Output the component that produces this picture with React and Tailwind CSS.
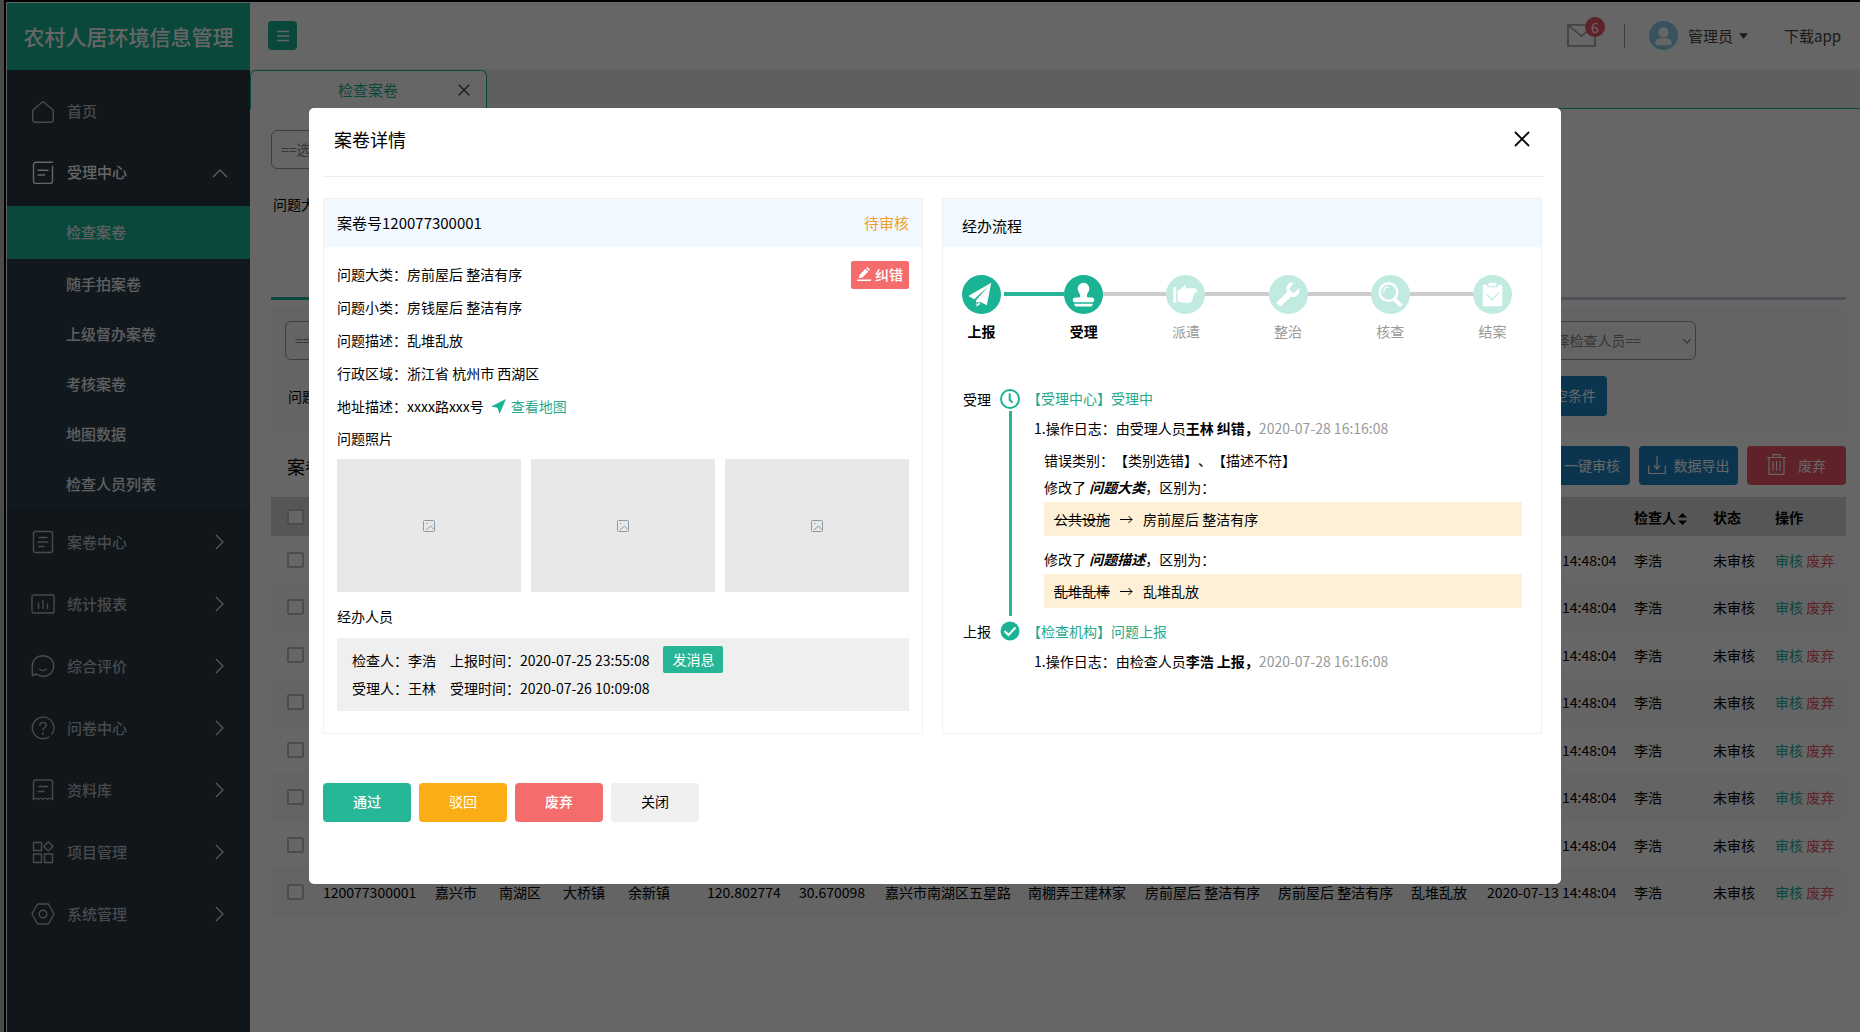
/* eslint-disable react/prop-types */
const subMenu = ['检查案卷', '随手拍案卷', '上级督办案卷', '考核案卷', '地图数据', '检查人员列表']

const menu = [
    { label: '案卷中心', icon: 'doc' },
    { label: '统计报表', icon: 'chart' },
    { label: '综合评价', icon: 'smile' },
    { label: '问卷中心', icon: 'question' },
    { label: '资料库', icon: 'receipt' },
    { label: '项目管理', icon: 'grid' },
    { label: '系统管理', icon: 'hexagon' },
]

const columns = [
    { label: '', width: 52 },
    { label: '案卷号', width: 112 },
    { label: '市', width: 64 },
    { label: '区', width: 64 },
    { label: '镇', width: 65 },
    { label: '村', width: 79 },
    { label: '经度', width: 92 },
    { label: '纬度', width: 86 },
    { label: '地址', width: 143 },
    { label: '描述', width: 117 },
    { label: '大类', width: 133 },
    { label: '小类', width: 133 },
    { label: '问题', width: 76 },
    { label: '时间', width: 147 },
    { label: '检查人', width: 79, sort: true },
    { label: '状态', width: 62 },
    { label: '操作', width: 71 },
]

const record = [
    '120077300001', '嘉兴市', '南湖区', '大桥镇', '余新镇', '120.802774', '30.670098',
    '嘉兴市南湖区五星路', '南棚弄王建林家', '房前屋后 整洁有序', '房前屋后 整洁有序',
    '乱堆乱放', '2020-07-13 14:48:04', '李浩', '未审核',
]

const details = [
    ['问题大类', '房前屋后 整洁有序'],
    ['问题小类', '房钱屋后 整洁有序'],
    ['问题描述', '乱堆乱放'],
    ['行政区域', '浙江省 杭州市 西湖区'],
]

const steps = [
    { label: '上报', icon: 'plane', done: true },
    { label: '受理', icon: 'stamp', done: true },
    { label: '派遣', icon: 'hand' },
    { label: '整治', icon: 'wrench' },
    { label: '核查', icon: 'search' },
    { label: '结案', icon: 'clipboard' },
]

const MenuIcon = ({ name }) => (
    <svg viewBox="0 0 24 24" className="size-6 shrink-0" fill="none" stroke="currentColor" strokeWidth="1.4" strokeLinecap="round" strokeLinejoin="round">
        {name === 'home' && <path d="M1.7 10.2 12 1.5l10.3 8.7v9.6a2.4 2.4 0 0 1-2.4 2.4H4.100a2.4 2.4 0 0 1-2.400-2.400z" />}
        {name === 'open' && <path d="M21.500 1.300H5a2.500 2.500 0 0 0-2.500 2.500v16.400a2.200 2.200 0 0 0 2.200 2.200h14.600a2.200 2.200 0 0 0 2.200-2.200V5.500M7 9.300h10M7 14h6.500" />}
        {name === 'doc' && (
            <>
                <rect x="2.500" y="1.500" width="19" height="21" rx="2" />
                <path d="M8 7.500h8M7 12h10M8 16.500h5" />
            </>
        )}
        {name === 'chart' && (
            <>
                <rect x="1" y="3" width="22" height="18" rx="2" />
                <path d="M7.500 11v5.500M12 8.500v8M16.500 12v4.500" />
            </>
        )}
        {name === 'smile' && <path d="M1.300 21.500V12C1.300 6 6 1.700 12 1.700S22.700 6 22.700 12 18 22.300 12 22.300c-3 0-5-1-6.500-2.300zM8.500 15.300c2 1.500 5 1.500 7 0" />}
        {name === 'question' && (
            <>
                <path d="M18 21a10.800 10.800 0 1 1 3-2.900M9 9.300c0-4 6.200-3.800 6.200-.3 0 2.500-3.200 2.500-3.200 5" />
                <path d="M12 17.500v.2" strokeWidth="2" />
            </>
        )}
        {name === 'receipt' && <path d="M2.500 21.500v-17a2.500 2.500 0 0 1 2.500-2.500h14.500a2 2 0 0 1 2 2v17.500c-1.600-1.800-3.200-1.800-4.700 0-1.600-1.800-3.200-1.800-4.800 0-1.600-1.800-3.200-1.800-4.800 0-1.500-1.800-3.100-1.800-4.700 0zM8 8.500h9M7 13.500h6" />}
        {name === 'grid' && <path d="M2.500 2.500h8v8h-8zM2.500 14h8v8.500h-8zM13.500 14h8v8.500h-8zM17.300 1.700l4.700 4.700-4.700 4.700-4.700-4.700z" />}
        {name === 'hexagon' && (
            <>
                <path d="M6.500 2h11L23 12l-5.500 10h-11L1 12z" />
                <circle cx="12" cy="12" r="3.800" />
            </>
        )}
    </svg>
)

const StepIcon = ({ name }) => (
    <svg viewBox="0 0 40 40" className="size-full" fill="#fff">
        {name === 'plane' && <path d="M30 8 6.500 21.500l6 3.300L26.500 12 14.500 26v5.500l3.700-4 7.300 3.500zM15 27.500l4 2-4 3z" />}
        {name === 'stamp' && (
            <>
                <path d="M20 8a6 6 0 0 1 6 6c0 2.800-2.500 4.500-2.500 7.500 0 1.200.8 1.500 2 1.500h3c1.500 0 2.500 1 2.500 2.500s-.5 2.500-2 2.500H11c-1.500 0-2-1-2-2.500S10 23 11.500 23h3c1.200 0 2-.3 2-1.500 0-3-2.500-4.700-2.500-7.500a6 6 0 0 1 6-6z" />
                <path d="M10.500 29.500h19v1.500h-1v1.200h-17V31h-1z" />
            </>
        )}
        {name === 'hand' && <path d="M7.500 12.500h3v16h-3zM12 15.500l2.500-.5 4-4c1.500-.5 2.500.5 2 2.500h9.500c2.200 0 2.200 5 0 5h-1.500c1 1.500.5 3-1 3.500.8 1.500.3 2.800-1 3.200.3 1.800-.7 3.300-2.500 3.300h-6.500L12 27z" />}
        {name === 'wrench' && <path d="M23.500 7.500c-5 .5-6.500 5.500-5 10L8.500 27.500c-.8.800-.8 1.600 0 2.300l1.800 1.800c.8.800 1.600.8 2.400 0l9.800-9.300c4.500 1.200 9-1.300 9-8.300l-.5-.5-5.300 4.700-3.200-1-1.200-3.500 3.700-5.200z" />}
        {name === 'search' && (
            <>
                <circle cx="18" cy="17.500" r="9" fill="none" stroke="#fff" strokeWidth="2.500" />
                <path d="M13 17.500c0-3 2-5 4.500-5" fill="none" stroke="#fff" strokeWidth="1.300" strokeLinecap="round" />
                <path d="m24 25 6 5.500" stroke="#fff" strokeWidth="4" strokeLinecap="round" />
            </>
        )}
        {name === 'clipboard' && (
            <>
                <path d="M11.500 10h3v2.500h11V10h3c1 0 1.500.5 1.500 1.500v19c0 .800-.5 1.500-1.500 1.500h-17c-1 0-1.500-.7-1.500-1.500v-19c0-1 .5-1.500 1.500-1.500z" />
                <path d="M16 8h8v3.500h-8z" />
                <path d="m14 20 5.500 5.500 7-7.500" fill="none" stroke="#c1eae0" strokeWidth="1.200" />
            </>
        )}
    </svg>
)

const Close = ({ className }) => (
    <svg viewBox="0 0 16 16" className={className} fill="none" stroke="currentColor" strokeWidth="1.800">
        <path d="m1 1 14 14M15 1 1 15" />
    </svg>
)

const Sidebar = () => (
    <aside className="w-[243px] shrink-0 bg-[#283742] text-[15px] font-medium">
        <h1 className="flex h-[67px] items-center justify-center bg-[#1ab394] text-[21px] font-medium text-white">农村人居环境信息管理</h1>
        <nav className="pt-[11px]">
            <div className="pb-[3px]">
                <a href="#home" className="flex h-[61px] items-center gap-3 pl-6 text-[#b4b9c0]">
                    <MenuIcon name="home" />首页
                </a>
                <a href="#accept" className="flex h-[61px] items-center gap-3 pr-[22px] pl-6 text-white">
                    <MenuIcon name="open" />
                    <span className="grow">受理中心</span>
                    <svg viewBox="0 0 16 10" className="h-[10px] w-4" fill="none" stroke="currentColor" strokeWidth="1.200"><path d="m1 9 7-7 7 7" /></svg>
                </a>
            </div>
            <div className="bg-[#2f404d] text-[#eceef0]">
                {subMenu.map((item, i) => (
                    <a
                        key={item}
                        href="#list"
                        className={i === 0 ? 'flex h-[53px] items-center bg-[#1ab394] pl-[59px]' : 'flex h-[50px] items-center pl-[59px]'}
                    >
                        {item}
                    </a>
                ))}
            </div>
            <div className="pt-0.5 text-[#b4b9c0]">
                {menu.map(item => (
                    <a key={item.label} href="#menu" className="flex h-[62px] items-center gap-3 pr-[25px] pl-6">
                        <MenuIcon name={item.icon} />
                        <span className="grow">{item.label}</span>
                        <svg viewBox="0 0 10 16" className="h-4 w-[10px] text-[#e0e4e8]" fill="none" stroke="currentColor" strokeWidth="1.200"><path d="m1 1 7 7-7 7" /></svg>
                    </a>
                ))}
            </div>
        </nav>
    </aside>
)

const Header = () => (
    <header className="flex h-[66px] items-center bg-white pr-[19px] pb-px pl-[18px] text-[15px] text-[#444]">
        <button aria-label="菜单" className="flex size-[29px] items-center justify-center rounded bg-[#1ab394] text-white">
            <svg viewBox="0 0 12 12" className="size-3" stroke="currentColor" strokeWidth="1.300"><path d="M0 1.500h12M0 6h12M0 10.500h12" /></svg>
        </button>
        <div className="relative ml-auto">
            <svg viewBox="0 0 29 23" className="h-[23px] w-[29px]" fill="none" stroke="#999" strokeWidth="1.600">
                <path d="M1 1h27v21H1zM2 2l12.500 10L27 2" />
            </svg>
            <span className="absolute -top-[7px] left-[18px] flex size-[20px] items-center justify-center rounded-full bg-[#ed5565] text-sm text-white">6</span>
        </div>
        <span className="ml-7 h-6 w-px bg-[#999]"></span>
        <button className="ml-6 flex items-center">
            <svg viewBox="0 0 30 30" className="size-[29px]">
                <circle cx="15" cy="15" r="15" fill="#8fcdf0" />
                <circle cx="15" cy="11.500" r="5.300" fill="#fff" />
                <path d="M6.500 22.500c0-3.500 3-5 8.500-5s8.500 1.500 8.500 5c0 1.500-.5 2.500-2 2.500h-13c-1.500 0-2-1-2-2.500z" fill="#fff" />
            </svg>
            <span className="ml-[10px]">管理员</span>
            <svg viewBox="0 0 10 6" className="ml-[6px] h-[6px] w-[9px]" fill="currentColor"><path d="M0 0h10L5 6z" /></svg>
        </button>
        <a href="#app" className="ml-9">下载app</a>
    </header>
)

const Select = ({ label, className }) => (
    <div className={className}>
        <select aria-label={label} className="block h-[39px] w-full appearance-none rounded-md border border-[#999] bg-transparent px-[9px] pb-0.5 text-sm text-[#888]">
            <option>{label}</option>
        </select>
        <svg viewBox="0 0 8 5" className="pointer-events-none absolute top-[18px] right-[5px] h-[5px] w-2" fill="none" stroke="#777" strokeWidth="1.200"><path d="m0 0 4 4 4-4" /></svg>
    </div>
)

const Checkbox = ({ label }) => (
    <input type="checkbox" aria-label={label} className="block h-4 w-[17px] appearance-none rounded-[2px] border-2 border-[#bdbdbd] bg-white" />
)

const List = () => (
    <main className="min-w-0 grow bg-white text-sm text-black">
        <Header />
        <div className="flex h-[40px] bg-[#eee]">
            <div className="mt-px flex w-[237px] items-center rounded-t-md border border-b-0 border-[#1ab394] bg-white pr-4 pl-[87px] text-[15px] text-[#1ab394]">
                <span className="grow">检查案卷</span>
                <button aria-label="关闭标签" className="text-[#444]"><Close className="size-3" /></button>
            </div>
            <div className="grow border-b border-[#1ab394]"></div>
        </div>
        <div className="pr-[14px] pl-[21px]">
            <div className="h-[188px] pt-[21px]">
                <Select label="==选择区域==" className="relative w-[200px]" />
                <p className="pt-[25px] pl-0.5">问题大类：</p>
            </div>
            <div className="flex">
                <div className="h-[3px] w-40 bg-[#1ab394]"></div>
                <div className="h-[3px] grow bg-[#c8c8d8]"></div>
            </div>
            <section className="mt-2 h-[123px] bg-[#fafafa] px-[14px] pt-[13px]">
                <div className="flex justify-between pr-[136px]">
                    <Select label="==选择区域==" className="relative w-[200px]" />
                    <Select label="==选择检查人员==" className="relative w-[180px]" />
                </div>
                <div className="mt-4 flex items-center justify-between pr-[225px]">
                    <span className="pl-[3px]">问题小类：</span>
                    <button className="h-[40px] rounded bg-[#1c84c6] px-[11px] pb-0.5 text-white">清空条件</button>
                </div>
            </section>
            <div className="mt-[15px] mb-3 flex items-center gap-[9px]">
                <h2 className="grow pl-4 text-lg">案卷列表</h2>
                <button className="h-[39px] rounded bg-[#1c84c6] px-[10px] pb-0.5 text-white">一键审核</button>
                <button className="flex h-[39px] w-[99px] items-center justify-center gap-2 rounded bg-[#1c84c6] pb-0.5 text-white">
                    <svg viewBox="0 0 18 18" className="size-[18px]" fill="none" stroke="currentColor" strokeWidth="1.200"><path d="M.7 9.500v8h16.600v-8M9 0v13M6 9.500l3 3.500 3-3.500" /></svg>
                    数据导出
                </button>
                <button className="flex h-[39px] w-[99px] items-center justify-center gap-3 rounded bg-[#ed5565] pb-0.5 text-white">
                    <svg viewBox="0 0 19 21" className="h-[21px] w-[19px]" fill="none" stroke="currentColor" strokeWidth="1.200"><path d="M0 3.500h19M2 4v16.300h15V4M6 3V.7h7V3M6 7v10M9.500 7v10M13 7v10" /></svg>
                    废弃
                </button>
            </div>
            <table className="w-full table-fixed text-left whitespace-nowrap">
                <colgroup>
                    {columns.map((col, i) => <col key={i} style={{ width: col.width }} />)}
                </colgroup>
                <thead className="bg-[#d8d8d8]">
                    <tr className="h-[39px]">
                        {columns.map((col, i) => (
                            <th key={i} className={i === 0 ? 'pl-4' : ''}>
                                {i === 0 && <Checkbox label="全选" />}
                                {col.label}
                                {col.sort && <svg viewBox="0 0 9 12" className="ml-0.5 inline h-3 w-[9px]" fill="currentColor"><path d="M4.500 0 9 4.500H0zM4.500 12 0 7.500h9z" /></svg>}
                            </th>
                        ))}
                    </tr>
                </thead>
                <tbody>
                    {Array.from({ length: 8 }, (_, row) => (
                        <tr key={row} className="h-[47px] even:h-[48px] even:bg-[#f9f9f9]">
                            <td className="pl-4"><Checkbox label={`选择第${row + 1}行`} /></td>
                            {record.map((cell, i) => <td key={i}>{cell}</td>)}
                            <td>
                                <a href="#check" className="text-[#1ab394]">审核</a>{' '}
                                <a href="#drop" className="text-[#ed5565]">废弃</a>
                            </td>
                        </tr>
                    ))}
                </tbody>
            </table>
        </div>
    </main>
)

const CaseCard = () => (
    <section className="flex-1 border border-[#f1f1f1]">
        <div className="flex h-[48px] items-center justify-between bg-[#f1f8fe] px-[13px] text-[15px]">
            <h3>案卷号120077300001</h3>
            <span className="text-[#f0a028]">待审核</span>
        </div>
        <div className="relative px-[13px] pt-[11px] pb-[22px]">
            <button className="absolute top-[14px] right-[13px] flex h-7 items-center gap-1 rounded-[2px] bg-[#f46c6c] px-[6px] pb-0.5 font-medium text-white">
                <svg viewBox="0 0 15 15" className="size-[14px]" fill="currentColor"><path d="M0 13.500h15V15H0zM2 12l.8-3.800L9 2l3 3-6.200 6.200zM9.800 1.200 11 0l3 3-1.200 1.200z" /></svg>
                纠错
            </button>
            {details.map(([name, value]) => (
                <p key={name} className="h-[33px] leading-[33px]">{name}：{value}</p>
            ))}
            <p className="flex h-[32px] items-center">
                地址描述：xxxx路xxx号
                <a href="#map" className="ml-[7px] flex items-center gap-[5px] text-[#26a98b]">
                    <svg viewBox="0 0 15 15" className="size-[15px] text-[#1ab394]" fill="currentColor"><path d="M15 0 0 7.500l6.500 1.300L8.500 15z" /></svg>
                    查看地图
                </a>
            </p>
            <p className="h-[37px] leading-[33px]">问题照片</p>
            <div className="grid grid-cols-3 gap-[10px]">
                {[1, 2, 3].map(n => (
                    <div key={n} className="flex h-[133px] items-center justify-center bg-[#e8e8e8]">
                        <svg viewBox="0 0 12 12" className="size-3" fill="none" stroke="#8a9ba5"><path d="M.5 1.500a1 1 0 0 1 1-1h9a1 1 0 0 1 1 1v9a1 1 0 0 1-1 1h-9a1 1 0 0 1-1-1zM3 10l4.500-4 3.500 3.500M3 3.500h1.300" /></svg>
                    </div>
                ))}
            </div>
            <p className="h-[46px] pt-[11px] leading-[26px]">经办人员</p>
            <div className="grid grid-cols-[auto_auto_1fr] items-center gap-x-[14px] bg-[#efefef] px-[15px] pt-2 pb-2">
                <span>检查人：李浩</span>
                <span>上报时间：2020-07-25 23:55:08</span>
                <button className="h-[27px] justify-self-start rounded-[2px] bg-[#26b595] px-[9px] pb-0.5 text-white">发消息</button>
                <span className="h-[30px] leading-[30px]">受理人：王林</span>
                <span>受理时间：2020-07-26 10:09:08</span>
            </div>
        </div>
    </section>
)

const Change = ({ field, from, to }) => (
    <div className="pl-[17px]">
        <p className="h-[28px] leading-[28px]">修改了 <b><i>{field}</i></b>，区别为：</p>
        <p className="mt-px flex h-[34px] items-center gap-[10px] bg-[#fef0d6] px-[10px]">
            <del>{from}</del>
            <svg viewBox="0 0 13 9" className="h-[9px] w-[13px]" fill="none" stroke="currentColor"><path d="M0 4.500h12M8.500 1 12 4.500 8.500 8" /></svg>
            {to}
        </p>
    </div>
)

const Log = ({ role, who }) => (
    <p className="h-[30px] pl-[7px] leading-[30px]">
        1.操作日志：由{role}<b>{who}，</b><span className="text-[#999]">2020-07-28 16:16:08</span>
    </p>
)

const FlowCard = () => (
    <section className="flex-1 border border-[#f1f1f1]">
        <h3 className="h-[48px] bg-[#f1f8fe] pt-1 pl-[19px] text-[15px] leading-[46px]">经办流程</h3>
        <ol className="flex pt-7 pr-[29px] pl-[19px]">
            {steps.map((step, i) => (
                <li key={step.label} className={i === 0 ? 'flex' : 'flex flex-1'}>
                    {i > 0 && <span className={i === 1 ? 'mt-[17px] ml-[3px] h-1 grow bg-[#26b595]' : 'mt-[17px] h-1 grow bg-[#ccc]'}></span>}
                    <div className="flex w-[39px] flex-col items-center">
                        <span className={step.done ? 'size-[39px] rounded-full bg-[#1ab394]' : 'size-[39px] rounded-full bg-[#c1eae0]'}>
                            <StepIcon name={step.icon} />
                        </span>
                        <span className={step.done ? 'mt-[7px] font-bold' : 'mt-[7px] text-[#999]'}>{step.label}</span>
                    </div>
                </li>
            ))}
        </ol>
        <div className="mt-[43px] grid grid-cols-[28px_20px_1fr] gap-x-[9px] pr-[19px] pl-5 [text-spacing-trim:space-all]">
            <span className="leading-[30px]">受理</span>
            <div className="flex flex-col items-center">
                <svg viewBox="0 0 20 20" className="mt-[5px] mb-[2px] size-5 shrink-0" fill="none" stroke="#1ab394" strokeWidth="2"><circle cx="10" cy="10" r="9" /><path d="M9.700 4.500V11l3 2.500" /></svg>
                <span className="w-[3px] grow bg-[#26b595]"></span>
            </div>
            <div className="-ml-0.5 pb-2">
                <p className="leading-[29px] text-[#26a98b]">【受理中心】受理中</p>
                <Log role="受理人员" who="王林 纠错" />
                <p className="h-[30px] pl-[17px] leading-[34px]">错误类别：【类别选错】、【描述不符】</p>
                <Change field="问题大类" from="公共设施" to="房前屋后 整洁有序" />
                <div className="h-[9px]"></div>
                <Change field="问题描述" from="乱堆乱棒" to="乱堆乱放" />
            </div>
            <span className="leading-[30px]">上报</span>
            <svg viewBox="0 0 20 20" className="mt-[5px] size-5"><circle cx="10" cy="10" r="9.500" fill="#1ab394" /><path d="m4.500 10 4 4 7-7.500" fill="none" stroke="#fff" strokeWidth="2" /></svg>
            <div className="-ml-0.5">
                <p className="leading-[30px] text-[#26a98b]">【检查机构】问题上报</p>
                <Log role="检查人员" who="李浩 上报" />
            </div>
        </div>
    </section>
)

const Modal = () => (
    <div className="fixed inset-0 z-20 flex items-start justify-center bg-black/60 pt-[108px] pl-[10px]">
        <div role="dialog" aria-label="案卷详情" className="w-full max-w-[1252px] rounded-[5px] bg-white pr-[19px] pb-[62px] pl-[14px] text-sm text-black">
            <div className="-mr-0.5 flex h-[69px] items-center justify-between border-b border-[#eee] pr-[14px] pb-[6px] pl-[11px]">
                <h2 className="text-lg">案卷详情</h2>
                <button aria-label="关闭窗口"><Close className="size-4" /></button>
            </div>
            <div className="mt-[21px] flex gap-[19px]">
                <CaseCard />
                <FlowCard />
            </div>
            <div className="mt-[49px] flex gap-2 text-white">
                <button className="h-[39px] w-[88px] rounded bg-[#26b698] pb-[3px] font-medium">通过</button>
                <button className="h-[39px] w-[88px] rounded bg-[#faad14] pb-[3px]">驳回</button>
                <button className="h-[39px] w-[88px] rounded bg-[#f46c6c] pb-[3px] font-medium">废弃</button>
                <button className="h-[39px] w-[88px] rounded bg-[#efefef] pb-[3px] text-black">关闭</button>
            </div>
        </div>
    </div>
)

export default function App() {
    return (
        <div className="min-h-screen bg-[#b8bcbc] pl-1 font-['Noto_Sans_CJK_SC',sans-serif]">
            <div className="flex min-h-screen border-t-2 border-l-2 border-black bg-white pt-px pl-px">
                <Sidebar />
                <List />
            </div>
            <Modal />
        </div>
    )
}
